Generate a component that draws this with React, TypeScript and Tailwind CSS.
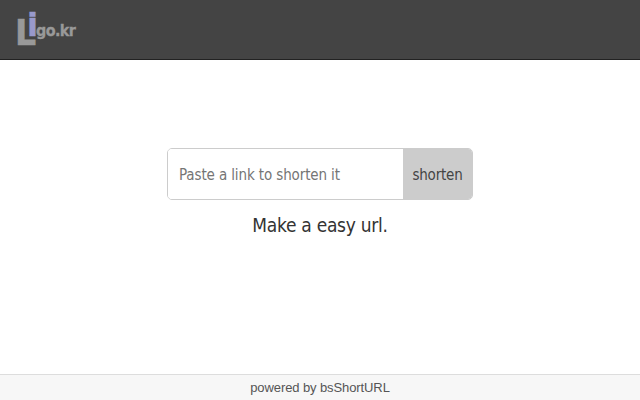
function Logo() {
  return (
    <a aria-label="Ligo.kr" className="relative block h-[34px] w-[62px] font-['DejaVu_Sans',sans-serif] font-bold leading-none text-[#999] [font-stretch:normal]">
      <span className="absolute left-[-1px] top-[3px] origin-left scale-x-[0.92] text-[36px] leading-[36px] [-webkit-text-stroke:0.6px_#999]">L</span>
      <span className="absolute left-[11px] top-[-3px] text-[32px] leading-[32px] text-[#9999cc] [-webkit-text-stroke:0.5px_#9999cc]">i</span>
      <span className="absolute left-[20px] top-[11px] font-['DejaVu_Sans_Condensed','DejaVu_Sans',sans-serif] text-[16px] leading-[16px] tracking-[-0.6px] [-webkit-text-stroke:0.3px_#999] [font-stretch:condensed]">go.kr</span>
    </a>
  );
}

export default function App() {
  return (
    <div className="flex h-[400px] w-[640px] flex-col overflow-hidden bg-white font-['DejaVu_Sans_Condensed','DejaVu_Sans',sans-serif] [font-stretch:condensed]">
      <header className="h-[60px] shrink-0 border-b border-[#222] bg-[#444] pl-4 pt-3">
        <Logo />
      </header>
      <main className="flex flex-1 flex-col items-center pt-[88px]">
        <form className="flex h-[52px] w-[306px] overflow-hidden rounded-[5px] border border-[#ccc]">
          <input
            className="min-w-0 flex-1 bg-white pl-[11px] pt-[2px] text-[15px] tracking-[-0.12px] text-[#444] outline-none placeholder:text-[#757575]"
            placeholder="Paste a link to shorten it"
          />
          <button type="button" className="w-[69px] shrink-0 bg-[#ccc] pt-[2px] text-[15px] tracking-[-0.2px] text-[#444]">
            shorten
          </button>
        </form>
        <p className="mt-[11px] text-[19px] leading-[28px] tracking-[-0.28px] text-[#333]">Make a easy url.</p>
      </main>
      <footer className="flex h-[26px] shrink-0 items-center justify-center border-t border-[#ddd] bg-[#f7f7f7] font-['Liberation_Sans',Arial,sans-serif] text-[13px] tracking-[-0.1px] text-[#555]">
        powered by bsShortURL
      </footer>
    </div>
  );
}
